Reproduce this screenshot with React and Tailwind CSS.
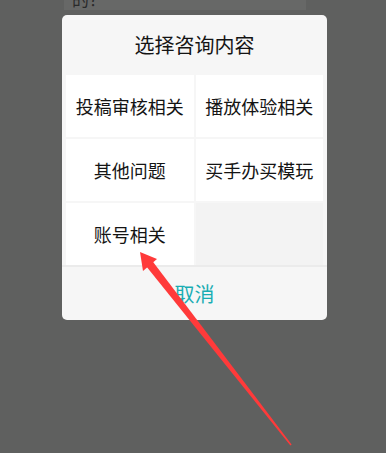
const options = ["投稿审核相关", "播放体验相关", "其他问题", "买手办买模玩", "账号相关"];

const App = () => {
  return (
    <div
      className="relative w-full h-[453px] overflow-hidden bg-[#5f605f]"
      style={{ fontFamily: '"Noto Sans CJK SC", "Noto Sans", sans-serif' }}
    >
      {/* page behind the dialog, cut off at the top */}
      <div className="ml-[64px] w-[242px] h-[10px] overflow-hidden bg-[#676867]">
        <div className="-mt-[11px] pl-[8px] text-[17px] leading-[20px] text-[#2a2a2a]">的？</div>
      </div>

      {/* dialog */}
      <div className="ml-[62px] mt-[5px] w-[265px] h-[305px] rounded-[5px] bg-[#f6f6f6] overflow-hidden flex flex-col">
        <div className="h-[60px] flex items-center justify-center text-[20px] text-[#141414]">
          选择咨询内容
        </div>
        <div className="px-[4px] grid grid-cols-2 gap-x-[2px] gap-y-[2px]">
          {options.map((o) => (
            <div key={o} className="h-[62px] bg-white flex items-center justify-center text-[18px] text-[#141414]">
              {o}
            </div>
          ))}
          <div className="h-[62px] bg-[#f3f3f3]"></div>
        </div>
        <div className="flex-1 border-t-2 border-[#ebebeb] flex items-center justify-center text-[20px] text-[#19adb3]">
          取消
        </div>
      </div>

      {/* red annotation arrow */}
      <svg className="absolute left-0 top-0" width="386" height="453" viewBox="0 0 386 453">
        <polygon points="144.8,264.4 151.2,259.6 291.6,444.6 290.4,445.4" fill="#ff3a3a" />
        <polygon points="140,252 157,259 143,271" fill="#ff3a3a" />
      </svg>
    </div>
  );
};

export default App;
